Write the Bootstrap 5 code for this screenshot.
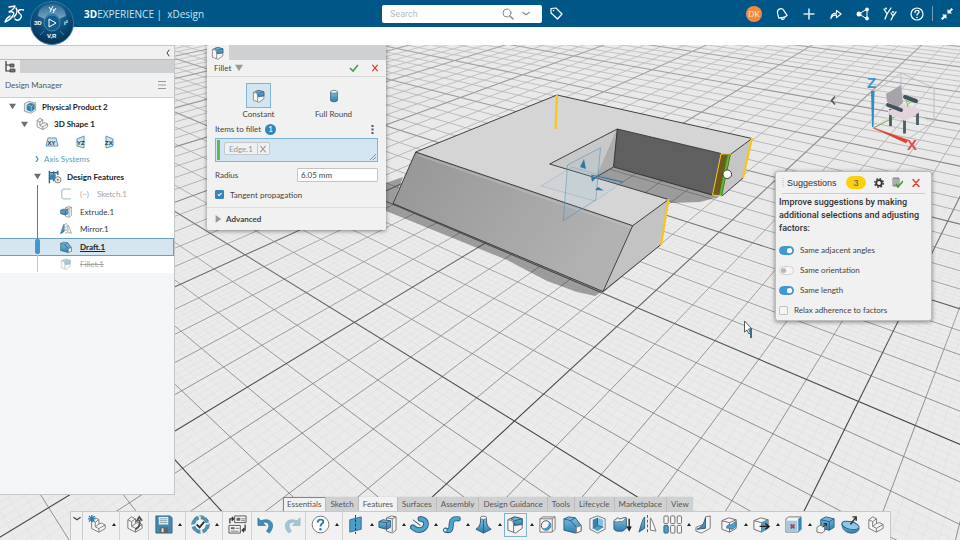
<!DOCTYPE html>
<html lang="en">
<head>
<meta charset="utf-8">
<meta name="viewport" content="width=device-width, initial-scale=1">
<title>xDesign</title>
<link href="https://cdn.jsdelivr.net/npm/bootstrap@5.3.0/dist/css/bootstrap.min.css" rel="stylesheet">
<style>
  body { font: 8px/12px Lato, "Liberation Sans", Arial, sans-serif; color: #444; background: #fff; }
  button, input { font: inherit; color: inherit; }
  button { border: 0; background: none; padding: 0; line-height: 1; }
  svg { display: block; flex: none; }
  .i8 { width: 8px; height: 8px; } .i10 { width: 10px; height: 10px; } .i12 { width: 12px; height: 12px; }
  .i14 { width: 14px; height: 14px; }
  .ln { fill: none; stroke: currentColor; stroke-linecap: round; stroke-linejoin: round; }

  .topbar { background: #005686; height: 27px; color: #fff; margin-bottom: 18px; }
  .top-left { flex: 386 1 0; } .top-right { flex: 395 1 0; gap: 13px; padding-right: 6px; }
  .top-right button { width: 14px; display: flex; justify-content: center; }
  .compass { position: absolute; left: 29px; top: 0; width: 45px; height: 46px; z-index: 5; }
  .brand { font: 10px/14px "Open Sans", sans-serif; margin-left: 60px; color: #cfe3ef; }
  .brand b { color: #fff; }
  .search { width: 160px; height: 18px; background: #fff; border-radius: 2px; color: #8a8a8a; }
  .search input { border: 0; outline: 0; font: 9px/12px Roboto, sans-serif; min-width: 0; background: none; }
  .search input::placeholder { color: #b9bcbe; opacity: 1; }
  .avatar-dot { width: 16px; height: 16px; border-radius: 50%; background: #f58a3c; color: #ffe9d8; }
  .topsep { width: 1px; height: 15px; background: #6f9fbc; margin: 0 -6px 0 -5px; }

  .scene { position: absolute; inset: 0; width: 100%; height: 100%; }
  .side { width: 175px; margin-bottom: 45px; background: #f3f5f7; border: 1px solid #c3c5c7; border-left: 0; z-index: 1; }
  .strip { height: 13px; background: #f0f0f0; }
  .tabs-row { background: #cfd0d2; height: 14px; border-top: 1px solid #bbb; }
  .tabs-row > span { background: #f1f1f1; }
  .side-title { height: 25px; background: #f1f1f1; border-bottom: 1px solid #d0d0d0; color: #555; padding: 0 8px 0 5px; }
  .tree { background: #fff; display: grid; grid-auto-rows: 1fr; min-height: 175px; color: #3a3a3a; position: relative; }
  .tree b { color: #222; }
  .tree li { display: flex; align-items: center; }
  .lv0 { padding-left: 9px; } .lv1 { padding-left: 21px; } .lv2 { padding-left: 34px; } .lv3 { padding-left: 60px; } .lvp { padding-left: 45px; }
  .node { margin: 0 5px 0 -4px; }
  .axis { color: #4b97b8; } .tree .axis a { color: #5b9db8; }
  .tree .ghost { color: #a5a5a5; }
  .tree .picked { background: #d5e6f0; border: 1px solid #6c9fbe; border-left: 0; }
  .rail { position: absolute; left: 37px; top: 87px; bottom: 1px; width: 1px; background: linear-gradient(#3f87b0 75%, #c4c4c4 75%); }
  .knob { position: absolute; left: -2px; top: 54px; width: 5px; height: 15px; border-radius: 2px; background: #3d98d3; }
  .tri { color: #6e6e6e; width: 7px; height: 7px; margin-right: 11px; }

  .panel { position: absolute; background: #f1f1f1; z-index: 2; box-shadow: 0 1px 4px rgba(0,0,0,.45); }
  .opt { margin-left: 6px; }
  .fillet { left: 207px; top: 0; width: 179px; border-radius: 2px; overflow: hidden; }
  .fillet .tabs-row { height: 15px; border: 0; }
  .fillet-head { height: 17px; border-bottom: 1px solid #d6d6d6; padding: 0 7px; }
  .kinds { padding: 6px 14px 0; }
  .kind { width: 75px; gap: 2px; }
  .kind > i { width: 25px; height: 25px; border: 1px solid transparent; display: flex; align-items: center; justify-content: center; }
  .kind.active > i { background: #d3e5f0; border-color: #7fb4d6; }
  .fields { padding: 4px 8px 0; }
  .line14 { height: 14px; } .line26 { height: 25px; }
  .count { width: 11px; height: 11px; border-radius: 50%; background: #3686bd; color: #fff; }
  .pick { height: 24px; background: #d3e5f0; border: 1px solid #7fb4d6; position: relative; padding: 1px; margin: 2px 0 6px; }
  .pick > i { width: 3px; background: #5cb85c; }
  .chip { height: 13px; border: 1px solid #c4c8ca; border-radius: 2px; background: #eef1f3; color: #969696; margin: 2px 0 0 4px; }
  .chip button { border-left: 1px solid #c4c8ca; width: 12px; height: 11px; color: #b09a9a; }
  .grip { position: absolute; right: 1px; bottom: 1px; }
  .radius { width: 81px; height: 14px; border: 1px solid #c4c4c4; background: #fff; padding: 0 3px; border-radius: 1px; }
  .form-check-input.tick { width: 9px; height: 9px; margin: 0; float: none; border-radius: 1px; border-color: #c2c2c2; background-color: #f4f4f4; }
  .form-check-input.tick:checked { background-color: #3686bd; border-color: #3686bd; }
  .adv { border-top: 1px solid #dedede; height: 23px; padding: 0 7px; }
  .red { color: #e0402f; }

  .suggest { right: 28px; top: 126px; width: 157px; border: 1px solid #bdbdbd; border-radius: 3px; padding: 0 3px; }
  .suggest-head { height: 22px; margin: 0 3px; gap: 8px; border-bottom: 1px solid #ccc; font: 9px/12px "Liberation Sans", sans-serif; color: #333; }
  .dots { margin-right: -5px; }
  .pill { background: #ffcf0d; width: 20px; height: 13px; border-radius: 7px; color: #555; }
  .hint { font: 500 9px/13px Roboto, sans-serif; color: #333; margin: 2px -3px 5px 0; }
  .optrow { height: 20px; }
  .form-switch .form-check-input.sw { width: 15px; height: 9px; margin: 0; float: none; border-color: #d0d0d0; background-color: #f6f6f6; }
  .form-switch .form-check-input.sw:checked { background-color: #3d98d3; border-color: #3d98d3; }

  .dock { position: absolute; left: 0; right: 0; bottom: 0; z-index: 2; }
  .docktabs { margin-left: 283px; height: 14px; background: #cfd0d2; border-radius: 2px 2px 0 0; color: #555; box-shadow: 0 0 1px #999; }
  .docktabs button { padding: 0 4px; border-right: 1px solid #bcbcbc; }
  .docktabs .active, .docktabs .home { background: #f1f1f1; }
  .docktabs .home { box-shadow: inset 2px 2px 0 -1px #3d98d3; }
  .bar { margin-left: 70px; height: 29px; background: #f1f1f1; border: 1px solid #c8c8c8; border-bottom: 0; padding-right: 2px; }
  .bar .fold { width: 12px; border-right: 1px solid #ccc; padding-top: 3px; }
  .grp { display: flex; align-items: center; padding: 0 2px 3px; border-right: 1px solid #d2d2d2; }
  .grp.tight { padding-right: 1px; }
  .grp.last { border: 0; padding: 0 0 3px; }
  .tool { width: 25px; height: 24px; display: flex; align-items: center; justify-content: center; flex: none; }
  .tool.on { border: 1px solid #7fb4d6; width: 23px; margin: 0 1px; }
  .more { width: 7px; height: 20px; flex: none; display: flex; align-items: center; justify-content: center; }
  .more::before { content: ""; border: 2px solid transparent; border-bottom: 3px solid #222; border-top: 0; }
</style>
</head>
<body class="d-flex flex-column vh-100 overflow-hidden position-relative">

<svg width="0" height="0" class="position-absolute" aria-hidden="true">
  <defs>
    <linearGradient id="blu" x1="0" y1="0" x2="0" y2="1"><stop offset="0" stop-color="#7fc0e4"/><stop offset="1" stop-color="#2f7eac"/></linearGradient>
    <g id="cube" stroke="#6b6b6b" stroke-linejoin="round"><path d="M2 6 9 3l8 2v9l-7 4-8-3z" fill="#f7f7f7"/><path d="M2 6l8 2 7-3M10 8v10" fill="none"/></g>
    <symbol id="ell" viewBox="0 0 20 20"><g stroke="#777" stroke-linejoin="round"><path d="M3 5 7 2l4 2v5l3-1 4 2v4l-7 4-8-4z" fill="#f7f7f7"/><path d="M3 5l4 2v5l4 2v4M7 7l4-3M11 14l7-4M7 12l4-3" fill="none"/></g></symbol>
    <symbol id="newell" viewBox="0 0 20 20"><use href="#ell" x="1" y="1" width="19" height="19"/><path d="M4 0v8M0 4h8M1 1l6 6M7 1 1 7" stroke="#2f7eac" stroke-width="1.4"/></symbol>
    <symbol id="open" viewBox="0 0 20 20"><use href="#ell" width="20" height="20"/><path d="M11 15c5-2 5-6 4-10m-3 2 3-5 3 4" fill="none" stroke="#555" stroke-width="2"/></symbol>
    <symbol id="save" viewBox="0 0 20 20"><path d="M2 1h15l2 2v16H2z" fill="#4488ad" stroke="#376a88"/><path d="M5 2h10v8H5z" fill="#e8eef1"/><path d="M6 4h8M6 6h8M6 8h8" stroke="#86a0ae"/><path d="M6 13h9v6H6z" fill="#5a646a"/><path d="M8 14h2v4H8z" fill="#e7e7e7"/></symbol>
    <symbol id="gearcheck" viewBox="0 0 20 20"><circle cx="10" cy="10" r="7" fill="none" stroke="#4d93bb" stroke-width="4" stroke-dasharray="9 2"/><circle cx="10" cy="10" r="9.2" fill="none" stroke="#376a88" stroke-width=".8" stroke-dasharray="5 2"/><circle cx="10" cy="10" r="5.500" fill="#f6f6f6"/><path d="M6 10l3 3 5-6" fill="none" stroke="#333" stroke-width="2"/></symbol>
    <symbol id="swap" viewBox="0 0 20 20"><g fill="#f8f8f8" stroke="#555"><path d="M7 1h12v7H7zM1 11h12v8H1z"/></g><path d="M9 3h4v3H9zM3 13h4v2H3z" fill="#666"/><path d="M14 4h4M14 6h4M8 14h4M3 17h8" stroke="#777"/><path d="M2 9V4h4M4 2l2 2-2 2M18 10v6h-3m2-2-2 2 2 2" fill="none" stroke="#333" stroke-width="1.3"/></symbol>
    <symbol id="undo" viewBox="0 0 20 20"><path d="M1 3v8h8L6 8c6-2 9 3 4 9l3 2c7-8 3-17-9-13z" fill="#3f8fbd" stroke="#2b6c93" stroke-width=".7"/></symbol>
    <symbol id="help" viewBox="0 0 20 20"><circle cx="10" cy="10" r="8.8" fill="#fff" stroke="#777"/><path d="M7 8c0-4 6-4 6-1 0 2-3 2-3 5" fill="none" stroke="#2e79a6" stroke-width="2"/><circle cx="10" cy="15" r="1.3" fill="#2e79a6"/></symbol>
    <symbol id="plane" viewBox="0 0 20 20"><path d="M4 5 16 2v13L4 18z" fill="#4d9fcb" stroke="#2e6f95"/><path d="M10 0v20" stroke="#333" stroke-dasharray="3 1.5"/></symbol>
    <symbol id="extrude" viewBox="0 0 20 20"><path d="M9 3l5-2 5 1v14l-4 3-6-2z" fill="#f4f4f4" stroke="#777"/><path d="M15 4v14M9 3l6 1 4-2" stroke="#777" fill="none"/><path d="M1 7l4-2 8 1v7l-4 2-8-2z" fill="url(#blu)" stroke="#2b5f80"/><path d="M1 7l8 1 4-2M9 8v7" fill="none" stroke="#2b5f80"/></symbol>
    <symbol id="revolve" viewBox="0 0 20 20"><path d="M11 4c8 0 8 11-1 12-3 0-5-1-7-3" fill="none" stroke="#2b5f80" stroke-width="6" stroke-linecap="round"/><path d="M11 4c8 0 8 11-1 12-3 0-5-1-7-3" fill="none" stroke="#4fa3cf" stroke-width="4" stroke-linecap="round"/><path d="M3 5l8 6" stroke="#444"/></symbol>
    <symbol id="sweep" viewBox="0 0 20 20"><path d="M4 16c7 2 5-4 6-8 1-5 4-4 7-4" fill="none" stroke="#2b5f80" stroke-width="5.5" stroke-linecap="round"/><path d="M4 16c7 2 5-4 6-8 1-5 4-4 7-4" fill="none" stroke="#4fa3cf" stroke-width="3.6" stroke-linecap="round"/><circle cx="3.500" cy="16" r="2" fill="#d7eaf4" stroke="#2b5f80"/></symbol>
    <symbol id="loft" viewBox="0 0 20 20"><path d="M7 3h6c0 7 1 9 5 12l-8 4-8-4c4-3 5-5 5-12z" fill="url(#blu)" stroke="#2b5f80"/><path d="M10 5v14" stroke="#2b5f80"/><ellipse cx="10" cy="3" rx="3.500" ry="1.700" fill="#f5f5f5" stroke="#777"/></symbol>
    <symbol id="filleti" viewBox="0 0 20 20"><path d="M2 5l6-3 9 2v10l-7 5-8-3z" fill="#f7f7f7" stroke="#6b6b6b"/><path d="M2 5c4 0 6 2 6 5v8" fill="none" stroke="#6b6b6b"/><path d="M5 4l5-2 7 2v6l-8 1c0-4-1-6-4-7z" fill="url(#blu)" stroke="#2b5f80"/><path d="M9 6l8-2" stroke="#2b5f80"/></symbol>
    <symbol id="hole" viewBox="0 0 20 20"><path d="M2 4l3-2h13v13l-3 3H2z" fill="#f5f5f5" stroke="#777"/><path d="M2 4h13v14M15 4l3-2" fill="none" stroke="#777"/><circle cx="8.500" cy="11" r="5" fill="#f4f4f4" stroke="#2b5f80"/><path d="M5 14c5 0 7-3 6-7 4 3 2 9-3 9z" fill="#3f97c6"/></symbol>
    <symbol id="drafti" viewBox="0 0 20 20"><path d="M1 4l5-2 7 1 6 8v6l-6 2-12-3z" fill="url(#blu)" stroke="#2b5f80"/><path d="M1 4l7 2 5-3M8 6l6 7" fill="none" stroke="#2b5f80"/><path d="M14 13l5-2v6l-5 2z" fill="#f7f7f7" stroke="#777"/></symbol>
    <symbol id="shell" viewBox="0 0 20 20"><path d="M2 4l8-3 8 3v11l-8 4-8-4z" fill="#f5f5f5" stroke="#777"/><path d="M5 5l5-2v8l-5 3z" fill="#3585b3"/><path d="M10 3l6 2v8l-6-2z" fill="#7fc0e4"/><path d="M5 14l5-3 6 2-6 4z" fill="#4d9fcb"/><path d="M10 3v8l-5 3m5-3 6 2" fill="none" stroke="#2b5f80"/></symbol>
    <symbol id="thick" viewBox="0 0 20 20"><path d="M1 6l4-3c3 3 5-1 9 0v11l-4 3c-3 0-6 1-9-2z" fill="url(#blu)" stroke="#2b5f80"/><path d="M1 6c3 3 5 0 9 1l4-4c-4-1-6 3-9 0z" fill="#f4f4f4" stroke="#777"/><path d="M17 4v11m-2-3 2 4 2-4" fill="none" stroke="#222" stroke-width="1.500"/></symbol>
    <symbol id="mirror" viewBox="0 0 20 20"><path d="M7 2v12l-6 4C3 12 4 6 7 2z" fill="url(#blu)" stroke="#2b5f80"/><path d="M13 3v13l6 1C17 12 16 7 13 3z" fill="#f7f7f7" stroke="#777"/><path d="M10 0v20" stroke="#555" stroke-dasharray="3 2"/></symbol>
    <symbol id="pattern" viewBox="0 0 20 20"><g fill="#f7f7f7" stroke="#6c6c6c"><rect x="1" y="1" width="4.500" height="8" rx="1"/><rect x="8" y="1" width="4.500" height="8" rx="1"/><rect x="15" y="1" width="4.500" height="8" rx="1"/><rect x="8" y="11" width="4.500" height="8" rx="1"/><rect x="15" y="11" width="4.500" height="8" rx="1"/></g><rect x="1" y="11" width="4.500" height="8" rx="1" fill="#4d9fcb" stroke="#2b5f80"/></symbol>
    <symbol id="rib" viewBox="0 0 20 20"><path d="M1 13l10-4V2l5-1v13l-9 5-6-2z" fill="#f5f5f5" stroke="#777"/><path d="M11 3v11l-9 1c5-2 7-5 9-12z" fill="url(#blu)" stroke="#2b5f80"/></symbol>
    <symbol id="split" viewBox="0 0 20 20"><use href="#cube"/><path d="M7 12c3-3 3-1 5-2s3-3 5-3v5c-2 1-3 3-5 3s-3-2-5-1z" fill="#4d9fcb" stroke="#2b5f80" stroke-width=".7"/></symbol>
    <symbol id="move" viewBox="0 0 20 20"><use href="#cube"/><path d="M10 8l7-3v9l-7 4z" fill="#4d9fcb"/><path d="M8 12h9m-3-3 4 3-4 3" fill="none" stroke="#222" stroke-width="1.500"/></symbol>
    <symbol id="del" viewBox="0 0 20 20"><path d="M2 4l3-2h13v13l-3 3H2z" fill="#f5f5f5" stroke="#777"/><path d="M3 6h11v12H3z" fill="#9ccbe6"/><path d="M15 4l3-2v13l-3 3z" fill="#3585b3"/><path d="M7 10l4 4m0-4-4 4" stroke="#d33" stroke-width="2"/></symbol>
    <symbol id="scalei" viewBox="0 0 20 20"><path d="M5 5l5-3 9 2v9l-5 3-9-2z" fill="url(#blu)" stroke="#2b5f80"/><path d="M5 5l9 2 5-3M14 7v9" fill="none" stroke="#2b5f80"/><path d="M1 13l3-2 5 1v5l-3 2-5-1z" fill="#f7f7f7" stroke="#777"/><path d="M7 13l4-4m-3 0h3v3" fill="none" stroke="#222"/></symbol>
    <symbol id="dome" viewBox="0 0 20 20"><path d="M1 9c0 13 18 12 18 5z" fill="url(#blu)" stroke="#2b5f80"/><ellipse cx="10" cy="11" rx="9.300" ry="4" transform="rotate(14 10 11)" fill="#8fc8e7" stroke="#2b5f80"/><path d="M10 10l6-8m-4 0h4v4" fill="none" stroke="#333" stroke-width="1.500"/></symbol>
    <symbol id="cyl" viewBox="0 0 20 20"><path d="M5 4v12c0 3 10 3 10 0V4z" fill="url(#blu)" stroke="#2b5f80"/><ellipse cx="10" cy="4" rx="5" ry="2.200" fill="#e6f2f8" stroke="#666"/></symbol>
    <symbol id="prod" viewBox="0 0 20 20"><path d="M2 5l6-3 10 2v11l-7 4-9-3z" fill="#dbe7ee" stroke="#7c868c"/><path d="M6 7l4-2 6 1v7l-4 3-6-2z" fill="#3585b3" stroke="#235a7c"/><path d="M6 7l6 2 4-3M12 9v7" fill="none" stroke="#9fd0ea"/></symbol>
    <symbol id="feat" viewBox="0 0 20 20"><path d="M2 1v18M2 4h12M2 12h6M14 1v6M8 2v14" stroke="#2b6488" stroke-width="2" fill="none"/><path d="M3 6h8v8H3z" fill="#3585b3"/><circle cx="14" cy="14" r="4.500" fill="#eee" stroke="#555"/><circle cx="14" cy="14" r="1.500" fill="#777"/></symbol>
    <symbol id="sketchi" viewBox="0 0 20 20"><path d="M18 2H6Q3 2 3 5v10q0 3 3 3h12" fill="none" stroke="#a9c6d6" stroke-width="2"/></symbol>
    <symbol id="x" viewBox="0 0 10 10"><path class="ln" stroke-width="1.500" d="M2 1.500l6 7M8 1.500l-6 7"/></symbol>
    <symbol id="down" viewBox="0 0 10 10"><path d="M0 1h10L5 9z" fill="currentColor"/></symbol>
    <symbol id="right" viewBox="0 0 10 10"><path d="M2 0v10l7-5z" fill="currentColor"/></symbol>
    <symbol id="chev" viewBox="0 0 10 10"><path class="ln" stroke-width="1.500" d="M1 3l4 3 4-3"/></symbol>
  </defs>
</svg>

<header class="topbar d-flex align-items-center flex-shrink-0">
  <div class="top-left d-flex align-items-center">
    <svg class="ms-1" width="20" height="22" viewBox="0 0 20 22" aria-label="3DS"><g class="ln" stroke-width="1.400"><path d="M5 4l6-1c0 1-2 4-6 6 5-1 6 1 3 5-2 3-5 4-7 5 1-3 3-5 5-6"/><path d="M20 7c-4-1-7 0-5 3 3 2 3 4 1 6s-4 1-5 0"/><path d="M12 5c2 3 1 6-2 9"/></g></svg>
    <div class="brand text-nowrap"><b>3D</b>EXPERIENCE | &nbsp;xDesign</div>
  </div>
  <div class="d-flex align-items-center">
    <form class="search d-flex align-items-center px-1" role="search">
      <input class="flex-grow-1 ps-1" type="search" placeholder="Search" aria-label="Search">
      <button type="button" aria-label="Find"><svg class="i12" viewBox="0 0 12 12"><circle class="ln" cx="5" cy="5" r="4"/><path class="ln" stroke-width="1.500" d="M8 8l3 3"/></svg></button>
      <button type="button" class="mx-2" aria-label="Search options"><svg class="i8" viewBox="0 0 10 10"><use href="#chev"/></svg></button>
    </form>
    <button type="button" class="text-white ms-2" aria-label="Tags"><svg width="13" height="13" viewBox="0 0 13 13"><path class="ln" stroke-width="1.200" d="M1 1.500l5-.5 6 6-4.500 5L1 6z"/><circle cx="3.500" cy="3.500" r=".8" fill="#fff"/></svg></button>
  </div>
  <div class="top-right d-flex align-items-center justify-content-end text-white">
    <span class="avatar-dot d-flex align-items-center justify-content-center">DK</span>
    <button type="button" aria-label="Notifications"><svg class="i12" viewBox="0 0 13 13"><path class="ln" stroke-width="1.300" d="M3 11L1.500 5C1.500 0 7 0 8 2l4 6c-2 3-5 2-9 3zM6 11c0 2 3 2 3-1"/></svg></button>
    <button type="button" aria-label="Add"><svg class="i12" viewBox="0 0 12 12"><path d="M6 .5v11M.5 6h11" stroke="#d9e6ee" stroke-width="1.600"/></svg></button>
    <button type="button" aria-label="Share"><svg class="i12" viewBox="0 0 13 12"><path class="ln" stroke-width="1.200" d="M1 11c0-4 2-6 6-6V2l5 4-5 4V7C4 7 2 8 1 11z"/></svg></button>
    <button type="button" aria-label="Network"><svg class="i14" viewBox="0 0 14 14"><path d="M3 7l8-5v10z" fill="none" stroke="#fff"/><circle cx="3" cy="7" r="2.500" fill="#fff"/><circle cx="11" cy="2.500" r="1.900" fill="#fff"/><circle cx="11" cy="11.500" r="1.900" fill="#fff"/></svg></button>
    <button type="button" aria-label="Communities"><svg class="i14" viewBox="0 0 14 14"><path class="ln" stroke-width="1.300" d="M1 2l3 5 4-6M4 7l-2 5M8 6l2 3 3-4M10 9l-2 4"/><circle cx="3" cy="1.500" r="1" fill="#fff"/><circle cx="10" cy="5" r="1" fill="#fff"/></svg></button>
    <button type="button" aria-label="Help"><svg class="i14" viewBox="0 0 14 14"><circle class="ln" cx="7" cy="7" r="6" stroke-width="1.200"/><path class="ln" stroke-width="1.300" d="M5 5.500c0-3 4-2.500 4-.5 0 1.500-2 1.500-2 3"/><circle cx="7" cy="10.500" r=".8" fill="#fff"/></svg></button>
    <span class="topsep"></span>
    <button type="button" aria-label="Collapse"><svg class="i12" viewBox="0 0 12 12"><path d="M6.500 5.500V1l1.500 1.500L10.500 0 12 1.500 9.500 4 11 5.500zM5.500 6.500V11L4 9.500 1.500 12 0 10.500 2.500 8 1 6.500z" fill="#fff"/></svg></button>
  </div>
</header>

<svg class="compass" viewBox="0 0 45 46" role="img" aria-label="Compass">
  <defs><radialGradient id="cg" cx=".5" cy=".3" r=".7"><stop offset="0" stop-color="#2d7ba8"/><stop offset=".6" stop-color="#0b4b77"/><stop offset="1" stop-color="#04314f"/></radialGradient>
  <linearGradient id="cg2" x1="0" y1="0" x2="0" y2="1"><stop offset="0" stop-color="#2c6d96"/><stop offset="1" stop-color="#8fb5cb"/></linearGradient></defs>
  <circle cx="23" cy="23" r="21.500" fill="url(#cg)" stroke="#2f79a5"/>
  <path d="M9 16C10 0 36 0 37 16l-7 3c-2-7-12-7-14 0z" fill="url(#cg2)" opacity=".8"/>
  <path d="M11 35l4-4M35 35l-4-4" stroke="#3f86b0"/>
  <circle cx="23" cy="23" r="8" fill="#145d8b" stroke="#3f86b0"/>
  <path d="M20 19v8l7-4z" fill="none" stroke="#fff"/>
  <path d="M20 7l2 3 2-4M22 10l-1 2M24 9l1 2 2-3M25 11l-1 2" fill="none" stroke="#fff"/>
  <g fill="#fff" font-family="Liberation Sans" font-size="6" font-weight="bold"><text x="5" y="25">3D</text><text x="35" y="25">i²</text><text x="18" y="38">V,R</text></g>
</svg>

<main class="d-flex flex-grow-1 position-relative overflow-hidden">
  <svg class="scene" viewBox="0 45 960 495" preserveAspectRatio="xMidYMid slice" role="img" aria-label="3D view">
    <defs>
      <linearGradient id="fadeg" gradientUnits="userSpaceOnUse" x1="0" y1="45" x2="0" y2="420"><stop offset="0" stop-color="#fff" stop-opacity=".4"/><stop offset="1" stop-color="#fff"/></linearGradient>
      <linearGradient id="fades" gradientUnits="userSpaceOnUse" x1="0" y1="60" x2="0" y2="300"><stop offset="0" stop-color="#fff" stop-opacity=".1"/><stop offset="1" stop-color="#fff"/></linearGradient>
      <mask id="mg" maskUnits="userSpaceOnUse" x="0" y="45" width="960" height="495"><path d="M0 45h960v495H0z" fill="url(#fadeg)"/></mask>
      <mask id="ms" maskUnits="userSpaceOnUse" x="0" y="45" width="960" height="495"><path d="M0 45h960v495H0z" fill="url(#fades)"/></mask>
      <linearGradient id="front" x1="0" y1="0" x2="1" y2=".4"><stop offset="0" stop-color="#959595"/><stop offset="1" stop-color="#b2b2b2"/></linearGradient>
    </defs>
    <path d="M0 45h960v495H0z" fill="#ebebeb"/>
    <path id="gridFine" mask="url(#ms)" fill="none" stroke="#dfdfdf" stroke-width=".6"/>
    <g mask="url(#mg)" fill="none"><path id="gridMid" stroke="#787878" stroke-width=".8"/><path id="gridMajor" stroke="#444" stroke-width="1.100"/></g>

    <path d="M393 203l210 88-8 5-18-4-30-11-40-21-121-49-6-26 23-8z" fill="#000" opacity=".33"/>
    <path d="M596 177l17-10 100 28 6 2-19 5-29 1-4-3z" fill="#000" opacity=".33"/>
    <path d="M549.700 164L617 129l-3.500 38-17.500 10z" fill="#c8c8c8"/>
    <path d="M617 129l-3.500 38-17.500 10z" fill="#adadad"/>
    <path d="M617 129l104 24.500-8.500 42-99-28.500z" fill="#5f5f5f"/>
    <path d="M731 154l21-15.500-9 39.500-21 18z" fill="#c6c6c6"/>
    <path d="M415.700 152L557 95l195 43.500L731 154l-10-.5L617.300 129l-67.600 35 118.800 35.500-35.800 26.200z" fill="#d5d5d5"/>
    <path d="M415.700 152l217 73.700L603 291.500l-210-88z" fill="url(#front)"/>
    <path d="M632.700 225.700l35.800-26.200-7.500 45-58 47z" fill="#c3c3c3"/>
    <path d="M418 155l214 73-28 61" fill="none" stroke="#ccc" stroke-width="1.500" opacity=".4"/>
    <g fill="none" stroke="#2f2f2f" stroke-width=".9"><path d="M415.700 152L557 95l195 43.500L731 154M721 153.500L617.300 129l-67.600 35 118.800 35.500-35.800 26.200-217-73.700L393 203.500l210 88 29.700-65.800M603 291.500l58-47M617.300 129l-3.800 38 99 28M613.500 167L596 177M722 196l21-18"/></g>
    <path d="M721 154h10l-9 42-9.500-1z" fill="#6d5a1c"/><path d="M727 155h3l-8 41h-3z" fill="#4d8f2b"/><path d="M729 155l-9 41" stroke="#59c02f" stroke-width="1.500"/>
    <g fill="none" stroke="#f5c61c"><path stroke-width="1" d="M721 154h10M721 154l-8.500 41 9.500 1"/><path stroke-width="2.200" d="M557 95l-1.500 34M752 138l-9 40M668.500 199l-7.500 46"/></g>
    <g stroke="#4b8cb5" fill="#7db8dc"><path fill-opacity=".1" stroke-opacity=".65" stroke-width=".8" d="M567.500 165l33-17.300-4.700 52.300-32.500 20.700z"/><path fill-opacity=".05" stroke-opacity=".35" stroke-width=".7" d="M541 186l31-19 51 15-28 19z"/><path stroke="#2f78a3" stroke-width="1.200" d="M591 175l32 7M598 176l-6 4"/><path fill="#2f78a3" stroke="none" d="M584 159l-4 8 6 2zM598 187l-3 3 9 .5zM591 176l5 2-4 4z"/></g>
    <circle cx="727.300" cy="174.300" r="4.300" fill="#fff" stroke="#444"/>

    <g fill="none" stroke="#bdbdbd"><path d="M901 73l33 15v34l-29 19-31-12M901 73l-28 20v36M901 73v25"/><path d="M934 122l-33-12-28 18" stroke="#d4d4d4"/></g>
    <path d="M873.500 128l25-13" stroke="#70ad47"/>
    <path d="M871 91h3.500l-1 36h-1.500z" fill="#2f8cc4"/><path d="M874 128l34 12-2 3z" fill="#dc4132" stroke="#dc4132" stroke-width=".6"/>
    <path d="M890.500 109v17M904.500 116v17.500M917.500 109v16" stroke="#4a5b66" stroke-width="2.800"/>
    <path d="M888 111l16-7 16 5v3l-15 9-17-7z" fill="#e3d3da"/><path d="M886 94l15-9 2 18-5 4-11-5z" fill="#a8a3aa"/>
    <path d="M888 105l13 5M905 97l11 4" stroke="#40535f" stroke-width="4" stroke-linecap="round"/><path d="M906 99l2 8m-2-5 3-1m-2 4 4-3" fill="none" stroke="#8cc06a"/>
    <g font-family="Liberation Sans" font-weight="bold" font-size="15"><text x="867" y="88" fill="#3796cd">Z</text><text x="907" y="150" fill="#e24a5d">X</text></g>
    <path d="M744.500 321v11l2.500-2 2 4 1.500-1-2-4h3.500z" fill="#fff" stroke="#333" stroke-width=".8"/><path d="M751 328v10" stroke="#38718f" stroke-width="2"/>
    <path d="M835 96.500l-3.500 4 3.500 4" fill="none" stroke="#555" stroke-width="1.500"/>
  </svg>

  <aside class="side d-flex flex-column flex-shrink-0">
    <div class="strip d-flex align-items-center justify-content-end pe-1"><button type="button" aria-label="Hide"><svg width="4" height="8" viewBox="0 0 4 8"><path class="ln" d="M3 1L1 4l2 3"/></svg></button></div>
    <div class="tabs-row d-flex"><span class="d-flex align-items-center px-1"><svg class="i12" viewBox="0 0 12 12"><path d="M2 0v10h4M2 4h4" fill="none" stroke="#333" stroke-width="1.200"/><path d="M6 3h4v3H6zM6 8h5v3H6z" fill="#777" stroke="#333" stroke-width=".7"/></svg></span></div>
    <div class="side-title d-flex align-items-center justify-content-between"><span>Design Manager</span><button type="button" aria-label="Menu"><svg class="i8" viewBox="0 0 8 8"><path d="M0 .5h8M0 4h8M0 7.500h8" stroke="#999"/></svg></button></div>
    <ul class="tree list-unstyled mb-0">
      <li class="lv0"><svg class="tri"><use href="#down"/></svg><svg class="i14 node"><use href="#prod"/></svg><b>Physical Product 2</b></li>
      <li class="lv1"><svg class="tri"><use href="#down"/></svg><svg class="i14 node"><use href="#ell"/></svg><b>3D Shape 1</b></li>
      <li class="lvp gap-3">
        <svg width="14" height="12" viewBox="0 0 14 12"><path d="M3 2h8l2 8H1z" fill="#cfe4f0" stroke="#5a9abd"/><text x="2.500" y="8.500" font-size="6" font-weight="bold" fill="#234">XY</text></svg>
        <svg width="12" height="14" viewBox="0 0 12 14"><path d="M2 4l7-3v12l-7-2z" fill="#cfe4f0" stroke="#5a9abd"/><text x="2" y="9.500" font-size="6" font-weight="bold" fill="#234">YZ</text></svg>
        <svg width="12" height="14" viewBox="0 0 12 14"><path d="M3 1l7 3v7l-7 2z" fill="#cfe4f0" stroke="#5a9abd"/><text x="2" y="9.500" font-size="6" font-weight="bold" fill="#234">ZX</text></svg>
      </li>
      <li class="lv2 axis"><svg width="6" height="6" viewBox="0 0 6 6" class="me-1"><path class="ln" stroke-width="1.300" d="M2 0l2 3-2 3"/></svg><a href="#" class="text-decoration-none">Axis Systems</a></li>
      <li class="lv2"><svg class="tri"><use href="#down"/></svg><svg class="i14 node"><use href="#feat"/></svg><b>Design Features</b></li>
      <li class="lv3 ghost"><svg class="i12"><use href="#sketchi"/></svg><span class="ms-2">(−)</span><span class="ms-2">Sketch.1</span></li>
      <li class="lv3"><svg class="i12 me-2"><use href="#extrude"/></svg>Extrude.1</li>
      <li class="lv3"><svg class="i12 me-2"><use href="#mirror"/></svg>Mirror.1</li>
      <li class="lv3 picked"><svg class="i12 me-2"><use href="#drafti"/></svg><b class="text-decoration-underline">Draft.1</b></li>
      <li class="lv3 ghost"><svg class="i12 me-2 opacity-50"><use href="#filleti"/></svg><s>Fillet.1</s></li>
      <li class="rail" aria-hidden="true"><span class="knob"></span></li>
    </ul>
  </aside>

  <section class="panel fillet" aria-label="Fillet">
    <div class="tabs-row d-flex"><span class="d-flex align-items-center px-1"><svg class="i14"><use href="#filleti"/></svg></span></div>
    <div class="fillet-head d-flex align-items-center"><span class="me-1">Fillet</span><svg class="i8 opacity-50"><use href="#down"/></svg>
      <button type="button" class="ms-auto me-2" aria-label="OK"><svg class="i10" viewBox="0 0 10 10"><path d="M1 5l3 3 5-6" fill="none" stroke="#43a047" stroke-width="1.600"/></svg></button>
      <button type="button" class="red ms-1" aria-label="Cancel"><svg class="i8"><use href="#x"/></svg></button></div>
    <div class="kinds d-flex">
      <button type="button" class="kind active d-flex flex-column align-items-center"><i><svg class="i14"><use href="#filleti"/></svg></i><span>Constant</span></button>
      <button type="button" class="kind d-flex flex-column align-items-center"><i><svg class="i14"><use href="#cyl"/></svg></i><span>Full Round</span></button>
    </div>
    <div class="fields">
      <div class="d-flex align-items-center line14"><span>Items to fillet</span><span class="count ms-1 d-flex align-items-center justify-content-center">1</span>
        <button type="button" class="ms-auto me-1" aria-label="More"><svg width="3" height="9" viewBox="0 0 3 9"><path d="M.5 0h2v2h-2zM.5 3.500h2v2h-2zM.5 7h2v2h-2z" fill="#555"/></svg></button></div>
      <div class="pick d-flex align-items-start"><i class="align-self-stretch"></i><span class="chip d-flex align-items-center ps-1">Edge.1<button type="button" class="ms-1 d-flex align-items-center justify-content-center" aria-label="Remove"><svg class="i8"><use href="#x"/></svg></button></span>
        <svg class="grip" width="6" height="6" viewBox="0 0 6 6"><path d="M0 6l6-6M3 6l3-3" stroke="#7c97a5"/></svg></div>
      <div class="d-flex align-items-center justify-content-between"><label for="rad">Radius</label><input id="rad" class="radius" value="6.05 mm"></div>
      <div class="d-flex align-items-center line26"><input class="form-check-input tick" type="checkbox" id="tan" checked><label for="tan" class="opt">Tangent propagation</label></div>
    </div>
    <div class="adv d-flex align-items-center"><svg class="i8 opacity-50"><use href="#right"/></svg><b class="ms-1">Advanced</b></div>
  </section>

  <section class="panel suggest" aria-label="Suggestions">
    <div class="suggest-head d-flex align-items-center pe-1"><svg width="2" height="10" viewBox="0 0 2 10" class="dots"><path d="M1 0v10" stroke="#bbb" stroke-dasharray="1 1"/></svg><span class="me-auto">Suggestions</span>
      <span class="pill d-flex align-items-center justify-content-center">3</span>
      <button type="button" aria-label="Settings"><svg class="i10" viewBox="0 0 10 10"><circle cx="5" cy="5" r="2.800" fill="none" stroke="#333" stroke-width="1.800"/><circle cx="5" cy="5" r="4.300" fill="none" stroke="#333" stroke-width="1.400" stroke-dasharray="1.700 1.680"/></svg></button>
      <button type="button" aria-label="Accept"><svg width="11" height="11" viewBox="0 0 11 11"><path d="M1 1h6v8H1zM3 1v8M5 1v8" fill="#ddd" stroke="#666" stroke-width=".8"/><path d="M4 7l2 3 5-6" fill="none" stroke="#43a02f" stroke-width="1.700"/></svg></button>
      <button type="button" class="red" aria-label="Close"><svg class="i10"><use href="#x"/></svg></button></div>
    <p class="hint">Improve suggestions by making additional selections and adjusting factors:</p>
    <div class="form-switch p-0 m-0 optrow d-flex align-items-center"><input class="form-check-input sw" type="checkbox" role="switch" id="s1" checked><label for="s1" class="opt">Same adjacent angles</label></div>
    <div class="form-switch p-0 m-0 optrow d-flex align-items-center"><input class="form-check-input sw" type="checkbox" role="switch" id="s2"><label for="s2" class="opt">Same orientation</label></div>
    <div class="form-switch p-0 m-0 optrow d-flex align-items-center"><input class="form-check-input sw" type="checkbox" role="switch" id="s3" checked><label for="s3" class="opt">Same length</label></div>
    <div class="optrow d-flex align-items-center"><input class="form-check-input tick" type="checkbox" id="s4"><label for="s4" class="opt">Relax adherence to factors</label></div>
  </section>

  <div class="dock d-flex flex-column align-items-start">
    <nav class="docktabs d-flex" aria-label="Tool tabs">
      <button type="button" class="home">Essentials</button><button type="button">Sketch</button><button type="button" class="active">Features</button><button type="button">Surfaces</button><button type="button">Assembly</button><button type="button">Design Guidance</button><button type="button">Tools</button><button type="button">Lifecycle</button><button type="button">Marketplace</button><button type="button" class="border-0">View</button>
    </nav>
    <div class="bar d-flex" id="bar"><button type="button" class="fold d-flex justify-content-center align-items-start" aria-label="Fold"><svg class="i8"><use href="#chev"/></svg></button></div>
  </div>
</main>

<script>
  // Ground grid: projective map from grid cells (i, j) to view coordinates.
  (function () {
    var a = 15.6, b = 56.2, c = 514.4, d = 4.85, e = -7.36, f = 421, g = -0.0462, h = 0.0497;
    function pt(i, j) {
      var w = g * i + h * j + 1;
      return ((a * i + b * j + c) / w).toFixed(1) + ' ' + ((d * i + e * j + f) / w).toFixed(1);
    }
    function alongJ(i) { return 'M' + pt(i, (0.3 - 1 - g * i) / h) + 'L' + pt(i, (6 - 1 - g * i) / h); }
    function alongI(j) { return 'M' + pt((0.3 - 1 - h * j) / g, j) + 'L' + pt((6 - 1 - h * j) / g, j); }
    var fine = '', mid = '', major = '';
    for (var k = -450; k <= 450; k++) {
      var s = alongJ(k / 5) + alongI(k / 5);
      if (k % 25 === 0) major += s; else if (k % 5 === 0) mid += s; else fine += s;
    }
    document.getElementById('gridFine').setAttribute('d', fine);
    document.getElementById('gridMid').setAttribute('d', mid);
    document.getElementById('gridMajor').setAttribute('d', major);
  })();

  // Action bar: [icon, label, has a fly-out menu, state]
  (function () {
    var groups = [
      [['newell', 'New', 1]], [['open', 'Import', 0]], [['save', 'Save', 1]], [['gearcheck', 'Update', 1]], [['swap', 'Replace', 0]],
      [['undo', 'Undo', 0], ['undo', 'Redo', 0, 'redo']], [['help', 'Assistance', 1]],
      [['plane', 'Plane', 1], ['extrude', 'Extrude', 1], ['revolve', 'Revolve', 1], ['sweep', 'Sweep', 1], ['loft', 'Loft', 1],
       ['filleti', 'Fillet', 1, 'on'], ['hole', 'Hole', 0], ['drafti', 'Draft', 0], ['shell', 'Shell', 0], ['thick', 'Thicken', 0],
       ['mirror', 'Mirror', 0], ['pattern', 'Pattern', 1], ['rib', 'Rib', 0], ['split', 'Split', 1], ['move', 'Move', 1],
       ['del', 'Delete', 1], ['scalei', 'Scale', 0], ['dome', 'Dome', 0], ['ell', 'Part', 0]]
    ];
    document.getElementById('bar').insertAdjacentHTML('beforeend', groups.map(function (grp, n) {
      var cls = 'grp' + (n === groups.length - 1 ? ' last' : grp[grp.length - 1][2] ? '' : ' tight');
      return '<div class="' + cls + '">' + grp.map(function (t) {
        var art = t[3] === 'redo' ? '<g transform="matrix(-1 0 0 1 20 0)" opacity=".45"><use href="#undo" width="20" height="20"/></g>' : '<use href="#' + t[0] + '" width="20" height="20"/>';
        return '<button type="button" class="tool' + (t[3] === 'on' ? ' on' : '') + '" aria-label="' + t[1] + '"><svg width="19" height="19" viewBox="0 0 20 20">' + art + '</svg></button>' +
          (t[2] ? '<button type="button" class="more" aria-label="' + t[1] + ' options"></button>' : '');
      }).join('') + '</div>';
    }).join(''));
  })();
</script>
<script src="https://cdn.jsdelivr.net/npm/bootstrap@5.3.0/dist/js/bootstrap.bundle.min.js"></script>
</body>
</html>
